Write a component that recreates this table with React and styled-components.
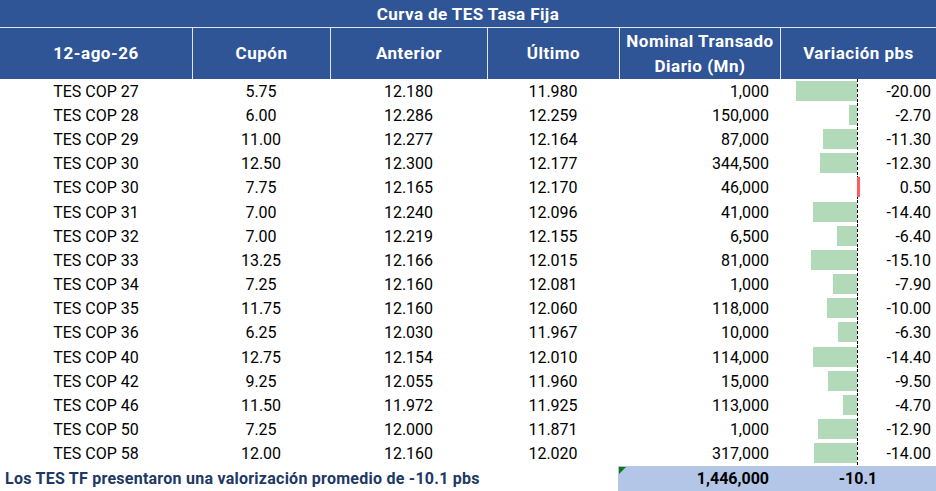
import { createGlobalStyle } from 'styled-components'
import styled from 'styled-components'

const Global = createGlobalStyle`
    body {
        margin: 0;
        background: #ffffff;
        font-family: Roboto, "Liberation Sans", sans-serif;
    }
`

const filas = [
    ['TES COP 27', '5.75', '12.180', '11.980', '1,000', -20.0],
    ['TES COP 28', '6.00', '12.286', '12.259', '150,000', -2.7],
    ['TES COP 29', '11.00', '12.277', '12.164', '87,000', -11.3],
    ['TES COP 30', '12.50', '12.300', '12.177', '344,500', -12.3],
    ['TES COP 30', '7.75', '12.165', '12.170', '46,000', 0.5],
    ['TES COP 31', '7.00', '12.240', '12.096', '41,000', -14.4],
    ['TES COP 32', '7.00', '12.219', '12.155', '6,500', -6.4],
    ['TES COP 33', '13.25', '12.166', '12.015', '81,000', -15.1],
    ['TES COP 34', '7.25', '12.160', '12.081', '1,000', -7.9],
    ['TES COP 35', '11.75', '12.160', '12.060', '118,000', -10.0],
    ['TES COP 36', '6.25', '12.030', '11.967', '10,000', -6.3],
    ['TES COP 40', '12.75', '12.154', '12.010', '114,000', -14.4],
    ['TES COP 42', '9.25', '12.055', '11.960', '15,000', -9.5],
    ['TES COP 46', '11.50', '11.972', '11.925', '113,000', -4.7],
    ['TES COP 50', '7.25', '12.000', '11.871', '1,000', -12.9],
    ['TES COP 58', '12.00', '12.160', '12.020', '317,000', -14.0],
]

const columnas = '192px 138px 157px 132px 161px 156px'
const escala = 3.05

export default function App() {
    return (
        <>
            <Global />
            <Tabla>
                <Titulo>Curva de TES Tasa Fija</Titulo>
                <Cabecera>
                    <CeldaCabecera>12-ago-26</CeldaCabecera>
                    <CeldaCabecera>Cupón</CeldaCabecera>
                    <CeldaCabecera>Anterior</CeldaCabecera>
                    <CeldaCabecera>Último</CeldaCabecera>
                    <CeldaCabecera>Nominal Transado<br />Diario (Mn)</CeldaCabecera>
                    <CeldaCabecera>Variación pbs</CeldaCabecera>
                </Cabecera>
                {filas.map((f, i) =>
                    <Fila key={i}>
                        <Celda>{f[0]}</Celda>
                        <Celda>{f[1]}</Celda>
                        <Celda>{f[2]}</Celda>
                        <Celda>{f[3]}</Celda>
                        <Celda alinear="right">{f[4]}</Celda>
                        <CeldaVariacion>
                            <ZonaNegativa>
                                {f[5] < 0 && <Barra color="#b3dab8" style={{ width: `${Math.abs(f[5]) * escala}px` }} />}
                            </ZonaNegativa>
                            <ZonaPositiva>
                                {f[5] > 0 && <Barra color="#ff5b5f" style={{ width: `${f[5] * escala + 1}px` }} />}
                            </ZonaPositiva>
                            <Valor>{f[5].toFixed(2)}</Valor>
                        </CeldaVariacion>
                    </Fila>
                )}
                <Pie>
                    <Resumen>Los TES TF presentaron una valorización promedio de -10.1 pbs</Resumen>
                    <Total>
                        <Marca />
                        <TotalNominal>1,446,000</TotalNominal>
                        <TotalVariacion>-10.1</TotalVariacion>
                    </Total>
                </Pie>
            </Tabla>
        </>
    )
}

const Tabla = styled.div`
    width: 936px;
    display: flex;
    flex-direction: column;
    color: #000000;
`

const Titulo = styled.div`
    height: 27px;
    display: flex;
    justify-content: center;
    align-items: center;

    background-color: #2f5597;
    border-bottom: 1px solid #dfe6f2;

    color: #ffffff;
    font-size: 17px;
    font-weight: 700;
    letter-spacing: 0.4px;
`

const Cabecera = styled.div`
    height: 51px;
    display: grid;
    grid-template-columns: ${columnas};
    background-color: #2f5597;
`

const CeldaCabecera = styled.div`
    display: flex;
    justify-content: center;
    align-items: center;
    text-align: center;

    color: #ffffff;
    font-size: 17px;
    font-weight: 700;
    line-height: 25px;
    letter-spacing: 0.5px;

    & + & {
        border-left: 1px solid #dfe6f2;
    }
`

const Fila = styled.div`
    height: 24.2px;
    display: grid;
    grid-template-columns: ${columnas};
`

const Celda = styled.div`
    display: flex;
    align-items: center;
    justify-content: ${props => props.alinear === 'right' ? 'flex-end' : 'center'};
    padding-right: ${props => props.alinear === 'right' ? '11px' : '0'};

    font-size: 16px;
`

const CeldaVariacion = styled.div`
    display: flex;
    align-items: stretch;
`

const ZonaNegativa = styled.div`
    width: 77px;
    display: flex;
    justify-content: flex-end;
    align-items: center;
`

const ZonaPositiva = styled.div`
    width: 14px;
    display: flex;
    align-items: center;
    background-image: repeating-linear-gradient(to bottom, #000000 0 3px, transparent 3px 5px);
    background-size: 1px 100%;
    background-repeat: no-repeat;
`

const Barra = styled.div`
    height: 20px;
    margin-top: -1px;
    background-color: ${props => props.color};
`

const Valor = styled.div`
    flex: 1;
    display: flex;
    align-items: center;
    justify-content: flex-end;
    padding-right: 5px;
    font-size: 16px;
`

const Pie = styled.div`
    height: 25px;
    display: grid;
    grid-template-columns: 618px 318px;
`

const Resumen = styled.div`
    display: flex;
    align-items: center;
    padding-left: 5px;

    color: #203864;
    font-size: 16px;
    font-weight: 700;
    letter-spacing: 0.25px;
    white-space: nowrap;
`

const Total = styled.div`
    position: relative;
    display: grid;
    grid-template-columns: 162px 156px;
    background-color: #b4c6e7;
    font-size: 16px;
    font-weight: 700;
`

const Marca = styled.div`
    position: absolute;
    top: 1px;
    left: 1px;
    width: 0;
    height: 0;
    border-top: 7px solid #0a7a0a;
    border-right: 7px solid transparent;
`

const TotalNominal = styled.div`
    display: flex;
    align-items: center;
    justify-content: flex-end;
    padding-right: 11px;
`

const TotalVariacion = styled.div`
    display: flex;
    align-items: center;
    justify-content: center;
`
